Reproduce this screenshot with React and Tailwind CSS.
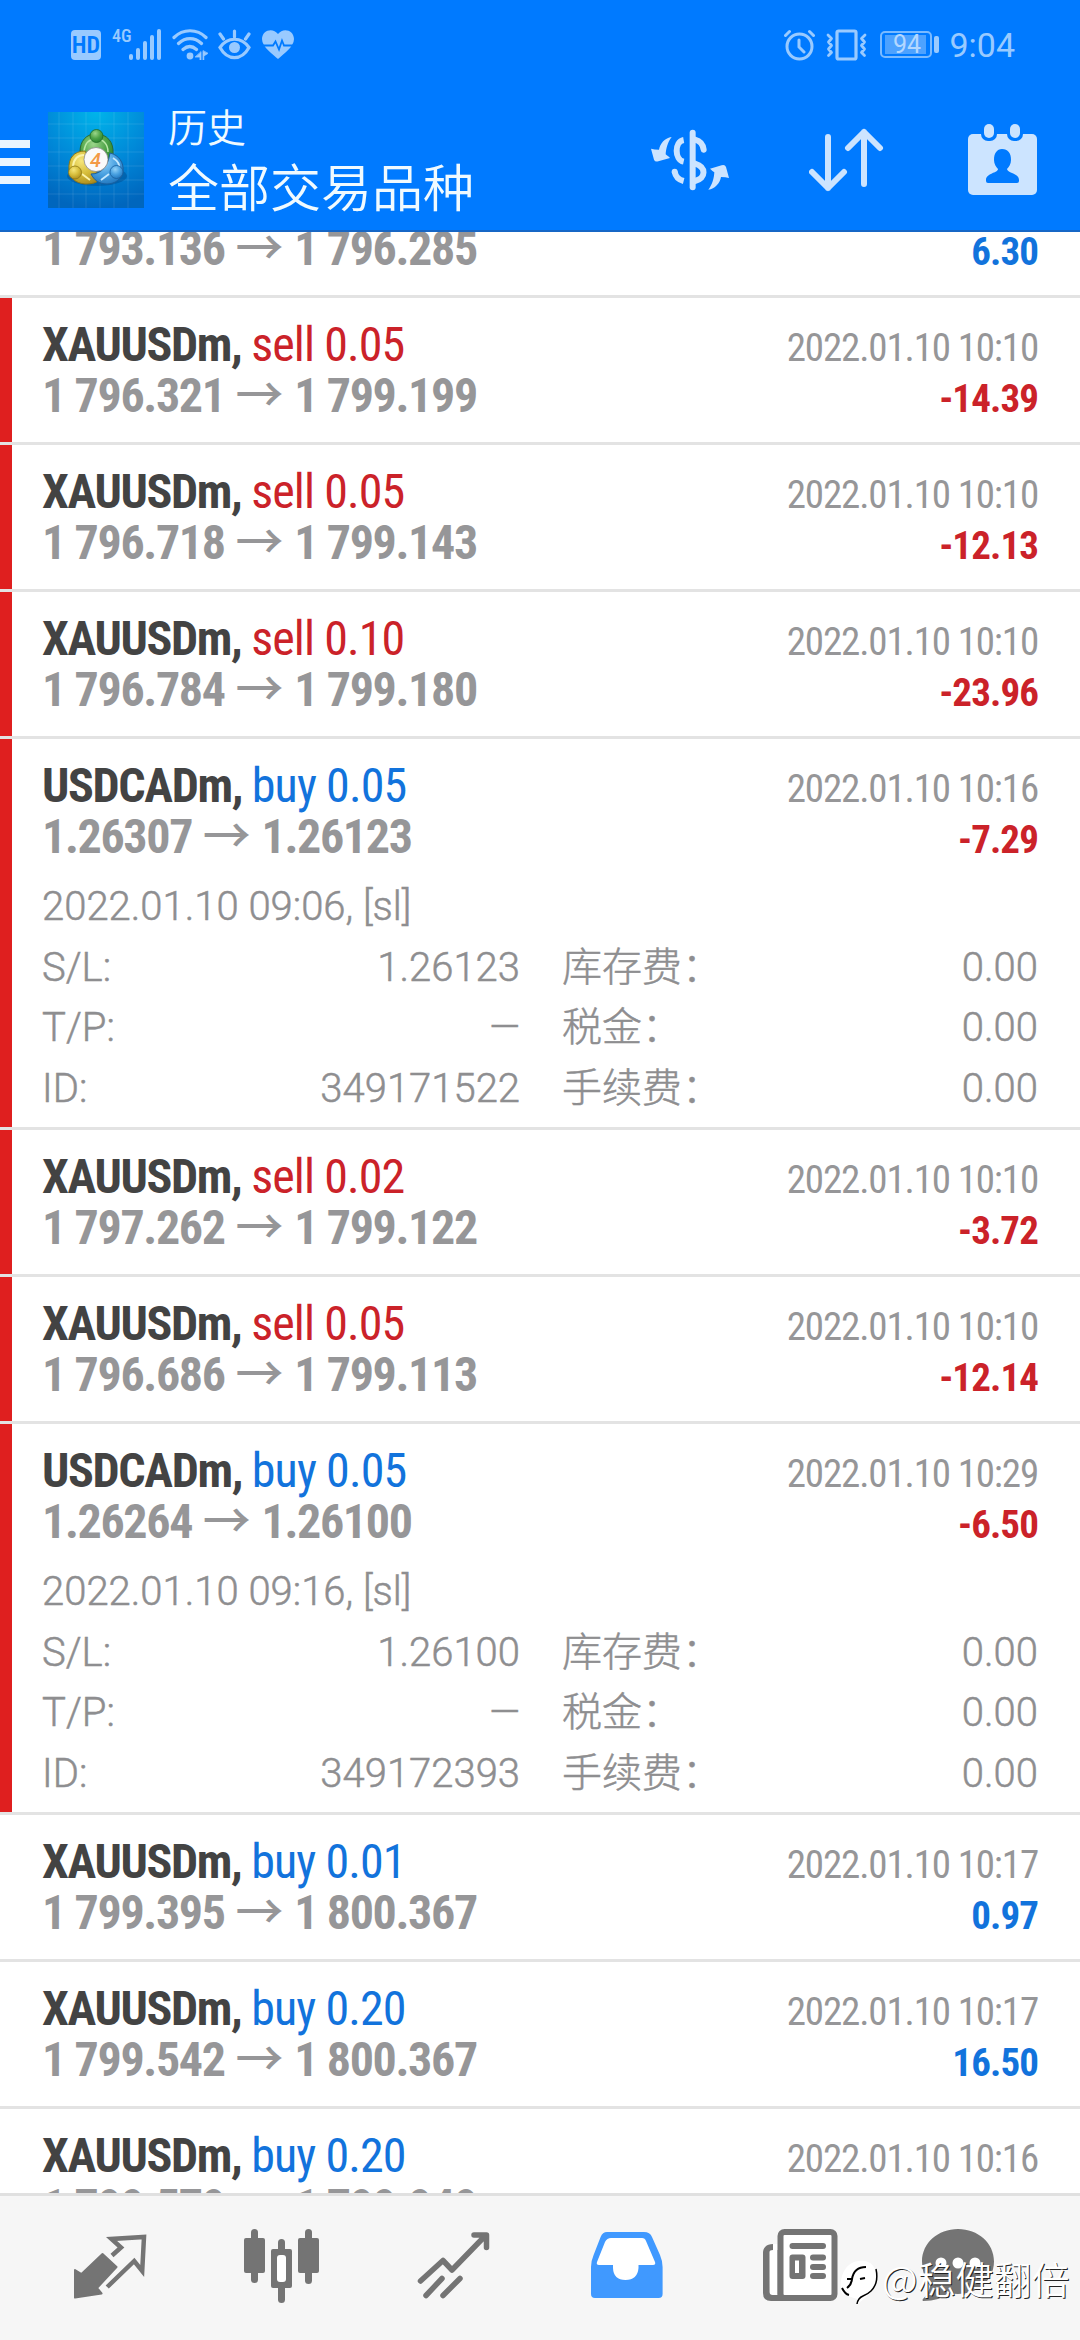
const trades = [
    { symbol: "XAUUSDm", side: "sell", volume: "0.05", open: "1 796.321", close: "1 799.199", time: "2022.01.10 10:10", profit: "-14.39" },
    { symbol: "XAUUSDm", side: "sell", volume: "0.05", open: "1 796.718", close: "1 799.143", time: "2022.01.10 10:10", profit: "-12.13" },
    { symbol: "XAUUSDm", side: "sell", volume: "0.10", open: "1 796.784", close: "1 799.180", time: "2022.01.10 10:10", profit: "-23.96" },
    {
        symbol: "USDCADm", side: "buy", volume: "0.05", open: "1.26307", close: "1.26123", time: "2022.01.10 10:16", profit: "-7.29",
        details: { opened: "2022.01.10 09:06, [sl]", sl: "1.26123", tp: "—", id: "349171522" },
    },
    { symbol: "XAUUSDm", side: "sell", volume: "0.02", open: "1 797.262", close: "1 799.122", time: "2022.01.10 10:10", profit: "-3.72" },
    { symbol: "XAUUSDm", side: "sell", volume: "0.05", open: "1 796.686", close: "1 799.113", time: "2022.01.10 10:10", profit: "-12.14" },
    {
        symbol: "USDCADm", side: "buy", volume: "0.05", open: "1.26264", close: "1.26100", time: "2022.01.10 10:29", profit: "-6.50",
        details: { opened: "2022.01.10 09:16, [sl]", sl: "1.26100", tp: "—", id: "349172393" },
    },
    { symbol: "XAUUSDm", side: "buy", volume: "0.01", open: "1 799.395", close: "1 800.367", time: "2022.01.10 10:17", profit: "0.97" },
    { symbol: "XAUUSDm", side: "buy", volume: "0.20", open: "1 799.542", close: "1 800.367", time: "2022.01.10 10:17", profit: "16.50" },
    { symbol: "XAUUSDm", side: "buy", volume: "0.20", open: "1 799.579", close: "1 799.949", time: "2022.01.10 10:16", profit: "" },
];

const StatusBar = () => (
    <div className="flex h-[89px] items-center justify-between pl-[71px] pr-[65px] text-[#99caff]">
        <div className="flex items-center">
            <div className="flex h-[30px] w-[30px] items-center justify-center rounded-[4px] bg-[#99caff] font-['Roboto_Condensed'] text-[24px] font-semibold text-[#007aff]">HD</div>
            <span className="ml-[11px] -mt-[18px] w-[17px] font-['Roboto_Condensed'] text-[18px] leading-none font-medium">4G</span>
            <svg className="h-[31px] w-[33px]" viewBox="0 0 33 31" fill="currentColor">
                <rect x="0" y="25" width="4" height="6" rx="2" />
                <rect x="7" y="19" width="4" height="12" rx="2" />
                <rect x="14" y="12" width="4" height="19" rx="2" />
                <rect x="21" y="6" width="4" height="25" rx="2" />
                <rect x="28" y="0" width="4" height="31" rx="2" />
            </svg>
            <svg className="ml-[10px] h-[31px] w-[36px]" viewBox="0 0 36 31" fill="none" stroke="currentColor" strokeWidth="3.2" strokeLinecap="round">
                <path d="M2 8.5C11-.5 25-.5 34 8.5M6.5 14.5c7-6.5 16-6.5 23 0M11 20.5c4.500-4 9-4 13.500 0" />
                <circle cx="18" cy="27" r="3.400" fill="currentColor" stroke="none" />
                <path d="M29 23v8l-1 0v-3l-4.500 0zM31 22v9l.8 0v-4l4-2.500z" fill="currentColor" strokeWidth=".8" />
            </svg>
            <svg className="ml-[10px] h-[31px] w-[33px]" viewBox="0 0 33 31" fill="none" stroke="currentColor" strokeWidth="3.200" strokeLinecap="round">
                <path d="M2 18.500C9.500 7.500 23.500 7.500 31 18.500C23.500 32 9.500 32 2 18.500z" />
                <circle cx="16.500" cy="18.500" r="5.500" fill="currentColor" stroke="none" />
                <path d="M16.500 2v6M2 5l3.500 5M31 5l-3.500 5" />
            </svg>
            <svg className="ml-[11px] h-[29px] w-[32px]" viewBox="0 0 32 29">
                <path d="M16 29C11 24.500 0 17 0 9C0 0 11-3 16 4C21-3 32 0 32 9C32 17 21 24.500 16 29z" fill="currentColor" />
                <path d="M1 15.500h10l2.500-4 3.500 8 3-9 2 5H31" fill="none" stroke="#007aff" strokeWidth="1.800" />
            </svg>
        </div>
        <div className="flex items-center">
            <svg className="h-[32px] w-[31px]" viewBox="0 0 31 32" fill="none" stroke="currentColor" strokeWidth="3" strokeLinecap="round">
                <circle cx="15.500" cy="17.500" r="12.500" />
                <path d="M15 11v7l5 5M1.500 6.500l4-4M29.500 6.500l-4-4" />
            </svg>
            <svg className="ml-[11px] h-[32px] w-[41px]" viewBox="0 0 41 32" fill="none" stroke="currentColor" strokeWidth="3.200" strokeLinecap="round" strokeLinejoin="round">
                <rect x="11" y="2" width="19" height="28" rx="1.500" />
                <path d="M2 6l3.500 3.500-3 3.500 3 3.500-3 3.500 3 3.500-3 3M39 6l-3.500 3.500 3 3.500-3 3.500 3 3.500-3 3.500 3 3" strokeWidth="2.800" />
            </svg>
            <div className="ml-[13px] flex h-[27px] w-[52px] items-center rounded-[5px] border-2 border-[#7abaff] p-[3px]">
                <span className="flex h-[19px] w-[41px] items-center justify-center bg-[#4da2ff] pl-[2px] font-['Roboto'] text-[25px] leading-none text-[#b3d7ff]">94</span>
            </div>
            <div className="ml-[2px] h-[17px] w-[5px] rounded-[2px] bg-[#99caff]"></div>
            <span className="ml-[10px] font-['Roboto'] text-[34px] leading-none">9:04</span>
        </div>
    </div>
);

const AppLogo = () => (
    <svg className="ml-[18px] h-[96px] w-[96px]" viewBox="0 0 96 96">
        <defs>
            <radialGradient id="sky" cx=".5" cy="0" r="1">
                <stop offset="0" stopColor="#00b4ea" />
                <stop offset=".6" stopColor="#0084d6" />
                <stop offset="1" stopColor="#0066bd" />
            </radialGradient>
            <radialGradient id="green" cx=".4" cy=".3" r=".8"><stop offset="0" stopColor="#9bd68a" /><stop offset=".5" stopColor="#4ea348" /><stop offset="1" stopColor="#1f7a2a" /></radialGradient>
            <radialGradient id="yellow" cx=".4" cy=".3" r=".8"><stop offset="0" stopColor="#f6e67a" /><stop offset=".5" stopColor="#d6bd3a" /><stop offset="1" stopColor="#a5841a" /></radialGradient>
            <radialGradient id="blue" cx=".4" cy=".3" r=".8"><stop offset="0" stopColor="#93d2f8" /><stop offset=".5" stopColor="#479fe0" /><stop offset="1" stopColor="#1a6fb8" /></radialGradient>
        </defs>
        <rect width="96" height="96" fill="url(#sky)" />
        <path d="M11 0v96M25 0v96M38 0v96M52 0v96M66 0v96M80 0v96M0 12h96M0 26h96M0 40h96M0 54h96M0 68h96M0 82h96" stroke="#fff" strokeOpacity=".1" strokeWidth="1" />
        <ellipse cx="49" cy="64" rx="30" ry="10" fill="#003c78" opacity=".35" />
        <path d="M32 40C32 29 38 22 48 22C59 22 66 30 65 42C65 49 63 54 60 56L36 50C33 48 32 45 32 40z" fill="url(#green)" stroke="#2c6b2f" strokeWidth="1" />
        <path d="M36 39C37 31 41 27 48 27C55 27 60 32 60 40" fill="none" stroke="#b9e8a8" strokeWidth="1.500" />
        <path d="M21 58C20 46 26 39 37 39L52 66C50 71 44 72 37 72C27 71 22 66 21 58z" fill="url(#yellow)" stroke="#8d7717" strokeWidth="1" />
        <path d="M25 54C26 47 30 43 36 43M34 62l8 6" fill="none" stroke="#fbf3a8" strokeWidth="2" />
        <path d="M62 41C71 43 76 51 75 59C74 67 67 72 59 72C51 72 46 68 43 62C54 62 60 54 62 41z" fill="url(#blue)" stroke="#1b5f9e" strokeWidth="1" />
        <path d="M65 46C70 49 72 53 71 57M61 62l-8 6" fill="none" stroke="#c4e8ff" strokeWidth="1.800" />
        <circle cx="48.500" cy="24" r="6.500" fill="url(#green)" stroke="#1e6b26" strokeWidth=".8" />
        <circle cx="27" cy="60.500" r="6.500" fill="url(#yellow)" stroke="#8d7717" strokeWidth=".8" />
        <circle cx="68.500" cy="60" r="6.500" fill="url(#blue)" stroke="#1b5f9e" strokeWidth=".8" />
        <circle cx="48" cy="47.500" r="12" fill="#fafafa" stroke="#8a8a8a" strokeWidth=".8" />
        <text x="47.500" y="54.500" textAnchor="middle" className="font-['Roboto'] text-[20px] font-medium italic" fill="#f39a45">4</text>
    </svg>
);

const Toolbar = () => (
    <div className="flex h-[141px] items-center text-[#cce4ff]">
        <div className="mt-[4px] flex w-[30px] flex-col gap-[10px]">
            <div className="h-[8px] bg-[#e9f5ff]"></div>
            <div className="h-[8px] bg-[#e9f5ff]"></div>
            <div className="h-[8px] bg-[#e9f5ff]"></div>
        </div>
        <AppLogo />
        <div className="-mt-[5px] ml-[24px] flex-1 font-['Noto_Sans_CJK_SC'] font-[350] text-[#f0faff]">
            <h2 className="h-[56px] text-[39px] leading-[56px]">历史</h2>
            <h1 className="h-[64px] text-[51px] leading-[64px]">全部交易品种</h1>
        </div>
        {/* currency exchange */}
        <svg className="h-[85px] w-[100px]" viewBox="0 0 300 255" fill="currentColor">
            <path d="M95 60C75 62 60 80 57 98C48 98 40 97 33 95L42 128Q45 136 55 133L90 123C85 118 82 116 77 112C78 95 83 75 95 60z" />
            <path d="M205 218C225 216 240 198 243 180C252 180 260 181 267 183L258 150Q255 142 245 145L210 155C215 160 218 162 223 166C222 183 217 203 205 218z" />
            <rect x="149" y="38" width="18" height="182" rx="9" />
            <path d="M131 69C103 74 103 128 131 134M104 164Q108 186 131 192" fill="none" stroke="currentColor" strokeWidth="18" />
            <circle cx="104" cy="164" r="9" />
            <path d="M165 68Q188 74 191 98M165 140C199 150 199 184 165 192" fill="none" stroke="currentColor" strokeWidth="18" strokeLinecap="round" />
        </svg>
        {/* sort */}
        <svg className="ml-[69px] h-[64px] w-[76px]" viewBox="0 0 76 64" fill="none" stroke="currentColor" strokeWidth="6" strokeLinecap="round" strokeLinejoin="round">
            <path d="M19 9v51M3 44l16 16 16-16M55 56V4M39 20L55 4l16 16" />
        </svg>
        {/* period */}
        <svg className="mr-[43px] ml-[83px] h-[71px] w-[69px]" viewBox="0 0 69 71">
            <rect x="0" y="10" width="69" height="61" rx="5" fill="currentColor" />
            <rect x="13" y="-3" width="16" height="20" rx="7" fill="#007aff" />
            <rect x="39" y="-3" width="16" height="20" rx="7" fill="#007aff" />
            <rect x="16" y="0" width="10" height="14" rx="5" fill="currentColor" />
            <rect x="42" y="0" width="10" height="14" rx="5" fill="currentColor" />
            <path d="M34 25c6 0 9 4 9 11 0 4-2 7-4 9 0 4 12 4 12 11v1q0 2-2 2H20q-2 0-2-2v-1c0-7 12-7 12-11-2-2-4-5-4-9 0-7 3-11 8-11z" fill="#007aff" />
        </svg>
    </div>
);

const Field = ({ label, value }) => (
    <div className="flex justify-between">
        <span>{label}</span>
        <span>{value}</span>
    </div>
);

const PriceLine = ({ open, close, profit }) => (
    <div className="flex h-[51px] items-baseline justify-between font-['Roboto_Condensed'] text-[48px] leading-[51px] font-bold">
        <p className="tracking-[-1.35px] text-[#969698]">
            {open} <span className="mr-px ml-px font-['Noto_Sans_CJK_SC'] leading-[0] font-medium tracking-normal">→</span> {close}
        </p>
        <span className={`text-[39px] tracking-[-0.9px] ${profit.startsWith("-") ? "text-[#cb2229]" : "text-[#1273dc]"}`}>{profit}</span>
    </div>
);

const Trade = ({ trade }) => (
    <div className={`relative shrink-0 border-b-[3px] border-[#e3e3e3] pt-[21px] pr-[42px] pl-[42px] ${trade.details ? "h-[391px]" : "h-[147px]"}`}>
        {trade.profit.startsWith("-") && <div className="absolute inset-y-0 left-0 w-[12px] bg-[#df1f1f]"></div>}
        <div className="flex h-[51px] items-baseline justify-between font-['Roboto_Condensed'] text-[48px] leading-[51px]">
            <p>
                <span className="font-bold tracking-[-1.35px] text-[#434343]">{trade.symbol}, </span>
                <span className={`tracking-[-0.9px] ${trade.side === "sell" ? "text-[#cb2229]" : "text-[#1273dc]"}`}>{trade.side} {trade.volume}</span>
            </p>
            <span className="text-[39px] tracking-[-1.15px] text-[#969698]">{trade.time}</span>
        </div>
        <PriceLine open={trade.open} close={trade.close} profit={trade.profit} />
        {trade.details && (
            <div className="mt-[15px] font-['Roboto','Noto_Sans_CJK_SC'] text-[40px] leading-[60.6px] font-light text-[#8e8e90] [-webkit-text-stroke:0.5px_#8e8e90]">
                <p>{trade.details.opened}</p>
                <div className="grid grid-cols-[478px_476px] gap-x-[42px]">
                    <Field label="S/L:" value={trade.details.sl} />
                    <Field label="库存费：" value="0.00" />
                    <Field label="T/P:" value={trade.details.tp} />
                    <Field label="税金：" value="0.00" />
                    <Field label="ID:" value={trade.details.id} />
                    <Field label="手续费：" value="0.00" />
                </div>
            </div>
        )}
    </div>
);

const BottomNav = () => (
    <div className="relative flex h-[147px] shrink-0 border-t-[3px] border-[#e0e0e0] bg-[#f6f6f6] pl-[24px] text-[#747474]">
        {/* quotes */}
        <svg className="h-[144px] w-[172px]" viewBox="0 0 172 144">
            <path d="M51 74l6.500 4L78.500 58l14 13-19.500 21 4.500 5.500L51 101.500z" fill="currentColor" stroke="currentColor" strokeWidth="2" strokeLinejoin="round" />
            <path d="M88 59.500l9-8-9.500-8.500 32.500-2-1.800 34-8-10-27 26" fill="none" stroke="currentColor" strokeWidth="4.500" />
        </svg>
        {/* candles */}
        <svg className="h-[144px] w-[172px]" viewBox="0 0 172 144" fill="currentColor">
            <rect x="48" y="42" width="21" height="35" rx="2" />
            <rect x="55" y="33" width="7" height="54" rx="3.500" />
            <rect x="102" y="42" width="21" height="35" rx="2" />
            <rect x="109" y="33" width="7" height="55" rx="3.500" />
            <rect x="82" y="43" width="7" height="64" rx="3.500" />
            <rect x="75" y="53" width="21" height="39" rx="2" />
            <rect x="81" y="59" width="9" height="27" rx="3" fill="#fff" />
        </svg>
        {/* trade */}
        <svg className="h-[144px] w-[172px]" viewBox="0 0 172 144" fill="none" stroke="currentColor" strokeWidth="5.500" strokeLinecap="round">
            <path d="M52.500 85L75 64.500l9 9.500 33-34M106 39h12.500v12.500" strokeLinejoin="round" />
            <path d="M58 99.500l16-17M75 99.500l17-17" />
        </svg>
        {/* history, the open tab */}
        <svg className="h-[144px] w-[172px]" viewBox="0 0 172 144">
            <path d="M67 36h37q6 0 8 5l8 18q2.600 6 2.600 12v27q0 4-4 4H55q-4 0-4-4V71q0-6 2.600-12l7-18q2-5 6.400-5z" fill="#4099ff" />
            <path d="M71 42h31q3 0 4 3l9 21q1 3-2 3H98.500v3q-1 12-13 12t-12.500-12v-3H59q-3 0-2-3l8-20q2-4 6-4z" fill="#fff" />
        </svg>
        {/* news */}
        <svg className="h-[144px] w-[172px]" viewBox="0 0 172 144" fill="currentColor">
            <path d="M61 48c-7 0-10 4-10 9v40q0 8 8 8h14V54H61z" />
            <path d="M57.500 56q0-2 3.500-2v-6h4.600v51h-5q-3 0-3-3z" fill="#fff" />
            <rect x="68.500" y="36" width="54" height="66" rx="4" fill="#fff" stroke="currentColor" strokeWidth="6" />
            <rect x="77.500" y="47" width="36.500" height="6" rx="3" />
            <rect x="77.500" y="58.500" width="16" height="24.500" rx="3" />
            <rect x="83" y="64.500" width="4" height="12.500" fill="#fff" />
            <rect x="98" y="58.500" width="16" height="6" rx="3" />
            <rect x="98" y="68" width="16" height="6" rx="3" />
            <rect x="98" y="77" width="16" height="6" rx="3" />
        </svg>
        {/* messages */}
        <svg className="h-[144px] w-[172px]" viewBox="0 0 172 144">
            <path d="M74 33c20 0 36 14 36 32.500S94 98 74 98q-5 0-9-1-9 8-26 8-1-1 0-2 6-6 7-13-8-10-8-24.500C38 47 54 33 74 33z" fill="currentColor" />
            <circle cx="57" cy="67" r="5.500" fill="#fff" />
            <circle cx="74" cy="67" r="5.500" fill="#fff" />
            <circle cx="91" cy="67" r="5.500" fill="#fff" />
        </svg>
        <div className="absolute top-[51px] left-[840px] flex items-center">
            <svg className="mt-[12px] h-[50px] w-[38px]" viewBox="0 0 38 50">
                <path d="M18 2C30 0 37 7 36.500 20C36 31 30 34 26 38C22 42 19 43 17 46L17 40L2 35C-1 28 0 5 18 2z" fill="#fff" />
                <path d="M36 10q3 14-5 22-3 3-8 5-5 2-6 8" fill="none" stroke="#000" strokeWidth="1.500" />
                <path d="M7 20h5q2-12 14-12M20 20l5-1M7 29q4-3 5-8M2 29q3 6 7 7" fill="none" stroke="#000" strokeWidth="2" />
            </svg>
            <span className="ml-[4px] font-['Noto_Sans_CJK_SC'] text-[38px] leading-[50px] font-[350] whitespace-nowrap text-white [text-shadow:1px_1px_0_#222]">@稳健翻倍</span>
        </div>
    </div>
);

export default function App() {
    return (
        <div className="flex h-[2340px] w-[1080px] flex-col overflow-hidden bg-white">
            <header className="z-10 h-[232px] shrink-0 border-b-2 border-[#1767c6] bg-[#007aff]">
                <StatusBar />
                <Toolbar />
            </header>
            <main className="flex min-h-0 flex-1 flex-col overflow-hidden">
                {/* row scrolled under the header */}
                <div className="-mt-[9px] h-[75px] shrink-0 border-b-[3px] border-[#e3e3e3] pr-[42px] pl-[42px]">
                    <PriceLine open="1 793.136" close="1 796.285" profit="6.30" />
                </div>
                {trades.map((trade, i) => (
                    <Trade key={i} trade={trade} />
                ))}
            </main>
            <BottomNav />
        </div>
    );
}
